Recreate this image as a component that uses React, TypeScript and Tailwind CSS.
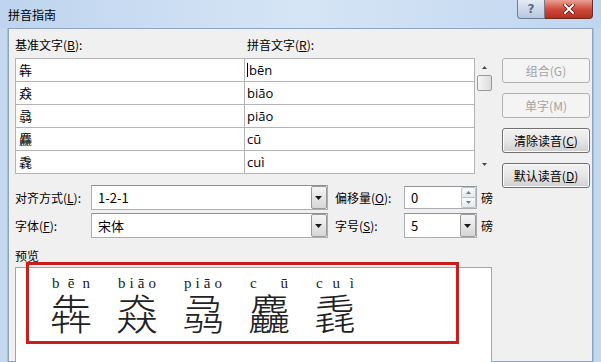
import React from 'react';

const rows = [
  { han: '犇', py: 'bēn' },
  { han: '猋', py: 'biāo' },
  { han: '骉', py: 'piāo' },
  { han: '麤', py: 'cū' },
  { han: '毳', py: 'cuì' },
];

const DownTri = () => (
  <svg width="7" height="4" viewBox="0 0 7 4">
    <path d="M0 0h7L3.5 4z" fill="#1a1a1a" />
  </svg>
);

const Combo = ({ value, width }: { value: string; width: string }) => (
  <div className={`${width} h-[25px] flex items-center bg-white border border-[#abadb3] border-t-[#8e9196]`}>
    <span className="flex-1 pl-[6px] leading-[16px] text-[13px]">{value}</span>
    <div className="w-[16px] h-[23px] flex items-center justify-center border border-[#9a9a9a] rounded-[2px] bg-gradient-to-b from-[#f6f6f6] to-[#d6d6d6]">
      <DownTri />
    </div>
  </div>
);

const Btn = ({ label, u, disabled }: { label: string; u: string; disabled?: boolean }) => (
  <div
    className={
      disabled
        ? 'h-[25px] flex items-center justify-center rounded-[3px] border border-[#adb2b5] bg-[#f4f4f4] text-[#a3a3a3]'
        : 'h-[25px] flex items-center justify-center rounded-[3px] border border-[#707070] bg-gradient-to-b from-[#f2f2f2] via-[#e6e6e6] to-[#d0d0d0] text-black shadow-[inset_0_0_0_1px_#fcfcfc]'
    }
  >
    <span className="leading-[16px]">
      {label}(<span className={disabled ? '' : 'underline'}>{u}</span>)
    </span>
  </div>
);

export default function App() {
  return (
    <div className="w-[601px] h-[362px] overflow-hidden relative bg-[#c4d8f0] font-['Noto_Sans_CJK_SC',sans-serif] text-[12px] text-black">
      {/* title bar */}
      <div className="h-[28px] flex items-start bg-gradient-to-r from-[#bed4ee] via-[#d6e5f6] to-[#c0d6ef]">
        <span className="ml-[8px] mt-[7px] leading-[16px]">拼音指南</span>
        <div className="ml-auto mr-[8px] flex">
          <div className="w-[28px] h-[19px] flex items-center justify-center border border-[#6d7f97] border-t-0 rounded-bl-[4px] bg-gradient-to-b from-[#e3ebf5] to-[#b8c8dc] text-[#5a6c86] font-['DejaVu_Sans',sans-serif] text-[12px] font-bold leading-none">
            ?
          </div>
          <div className="w-[48px] h-[19px] flex items-center justify-center border border-[#6b2a22] border-l-0 border-t-0 rounded-br-[4px] bg-gradient-to-b from-[#e8a093] via-[#cf4c3c] to-[#b3301f]">
            <svg width="12" height="10" viewBox="0 0 12 10">
              <path d="M2 1l8 8M10 1l-8 8" stroke="#5a1810" strokeWidth="3.6" strokeLinecap="square" />
              <path d="M2 1l8 8M10 1l-8 8" stroke="#ffffff" strokeWidth="2" strokeLinecap="square" />
            </svg>
          </div>
        </div>
      </div>

      <div className="flex h-[334px]">
        <div className="w-[8px] border-r border-[#a9bfdb]" />
        <div className="w-[585px] bg-[#f0f0f0] border border-[#8da3bf] pl-[6px] pt-[7px] flex">
          <div className="w-[478px]">
            {/* column labels */}
            <div className="h-[22px] flex leading-[18px]">
              <span className="w-[232px]">
                基准文字(<span className="underline">B</span>):
              </span>
              <span>
                拼音文字(<span className="underline">R</span>):
              </span>
            </div>

            {/* grid */}
            <div className="flex">
              <div className="w-[460px] border-t border-[#b4b4b4]">
                {rows.map((r, i) => (
                  <div key={r.han} className="h-[23px] flex border-b border-[#b4b4b4]">
                    <div className="w-[230px] bg-white border-l border-r border-[#b4b4b4] pl-[3px] flex items-center text-[13px] leading-[16px]">
                      {r.han}
                    </div>
                    <div className="w-[230px] bg-white border-r border-[#b4b4b4] pl-[2px] flex items-center text-[13px] font-['Open_Sans',sans-serif] leading-[16px]">
                      {i === 0 && <span className="w-px h-[14px] bg-black mr-px" />}
                      {r.py}
                    </div>
                  </div>
                ))}
              </div>
              {/* scrollbar */}
              <div className="w-[18px] flex flex-col items-center">
                <div className="h-[17px] flex items-center justify-center pt-[2px]">
                  <svg width="5" height="3" viewBox="0 0 5 3">
                    <path d="M0 3h5L2.5 0z" fill="#4a4a4a" />
                  </svg>
                </div>
                <div className="w-[15px] h-[16px] rounded-[2px] border border-[#9a9a9a] bg-gradient-to-r from-[#f6f6f6] to-[#dcdcdc]" />
                <div className="flex-1" />
                <div className="h-[17px] flex items-center justify-center pb-[2px]">
                  <svg width="5" height="3" viewBox="0 0 5 3">
                    <path d="M0 0h5L2.5 3z" fill="#4a4a4a" />
                  </svg>
                </div>
              </div>
            </div>

            {/* alignment / offset */}
            <div className="mt-[11px] h-[25px] flex items-center">
              <span className="w-[76px] leading-[16px]">
                对齐方式(<span className="underline">L</span>):
              </span>
              <Combo value="1-2-1" width="w-[237px]" />
              <span className="ml-[7px] w-[69px] leading-[16px]">
                偏移量(<span className="underline">O</span>):
              </span>
              <div className="w-[73px] h-[23px] flex items-center bg-white border border-[#abadb3] border-t-[#8e9196]">
                <span className="flex-1 pl-[6px] text-[13px] leading-[16px]">0</span>
                <div className="w-[15px] h-[21px] flex flex-col">
                  <div className="flex-1 flex items-center justify-center border border-[#b8c2cf] rounded-t-[2px] bg-gradient-to-b from-[#fafbfc] to-[#e4e9ef]">
                    <svg width="5" height="3" viewBox="0 0 5 3">
                      <path d="M0 3h5L2.5 0z" fill="#6b7b90" />
                    </svg>
                  </div>
                  <div className="flex-1 flex items-center justify-center border border-t-0 border-[#b8c2cf] rounded-b-[2px] bg-gradient-to-b from-[#fafbfc] to-[#e4e9ef]">
                    <svg width="5" height="3" viewBox="0 0 5 3">
                      <path d="M0 0h5L2.5 3z" fill="#6b7b90" />
                    </svg>
                  </div>
                </div>
              </div>
              <span className="ml-[4px] leading-[16px]">磅</span>
            </div>

            {/* font / size */}
            <div className="mt-[3px] h-[25px] flex items-center">
              <span className="w-[76px] leading-[16px]">
                字体(<span className="underline">F</span>):
              </span>
              <Combo value="宋体" width="w-[237px]" />
              <span className="ml-[7px] w-[69px] leading-[16px]">
                字号(<span className="underline">S</span>):
              </span>
              <Combo value="5" width="w-[73px]" />
              <span className="ml-[4px] leading-[16px]">磅</span>
            </div>

            {/* preview */}
            <div className="mt-[10px] h-[16px] leading-[16px]">预览</div>
            <div className="mt-[3px] w-[477px] h-[100px] bg-white border border-[#a5a5a5] pl-[35px] pt-[7px] flex gap-[26px]">
              {rows.map((r) => (
                <div key={r.han} className="w-[40px] flex flex-col items-stretch">
                  <div className="h-[16px] flex justify-between px-px font-['Liberation_Serif',serif] text-[15px] leading-[16px] text-[#222]">
                    {r.py.split('').map((c, j) => (
                      <span key={j}>{c}</span>
                    ))}
                  </div>
                  <div className="text-[42px] leading-[42px] font-light text-center text-[#222] -mx-[2px]">{r.han}</div>
                </div>
              ))}
            </div>
          </div>

          {/* side buttons */}
          <div className="ml-[9px] w-[88px] pt-[22px] flex flex-col gap-[10px]">
            <Btn label="组合" u="G" disabled />
            <Btn label="单字" u="M" disabled />
            <Btn label="清除读音" u="C" />
            <Btn label="默认读音" u="D" />
          </div>
        </div>
        <div className="w-[8px] border-l border-[#a9bfdb]" />
      </div>

      {/* red annotation box */}
      <div className="absolute left-[26px] top-[262px] w-[433px] h-[82px] border-[3px] border-[#cc1c1c]" />
    </div>
  );
}
